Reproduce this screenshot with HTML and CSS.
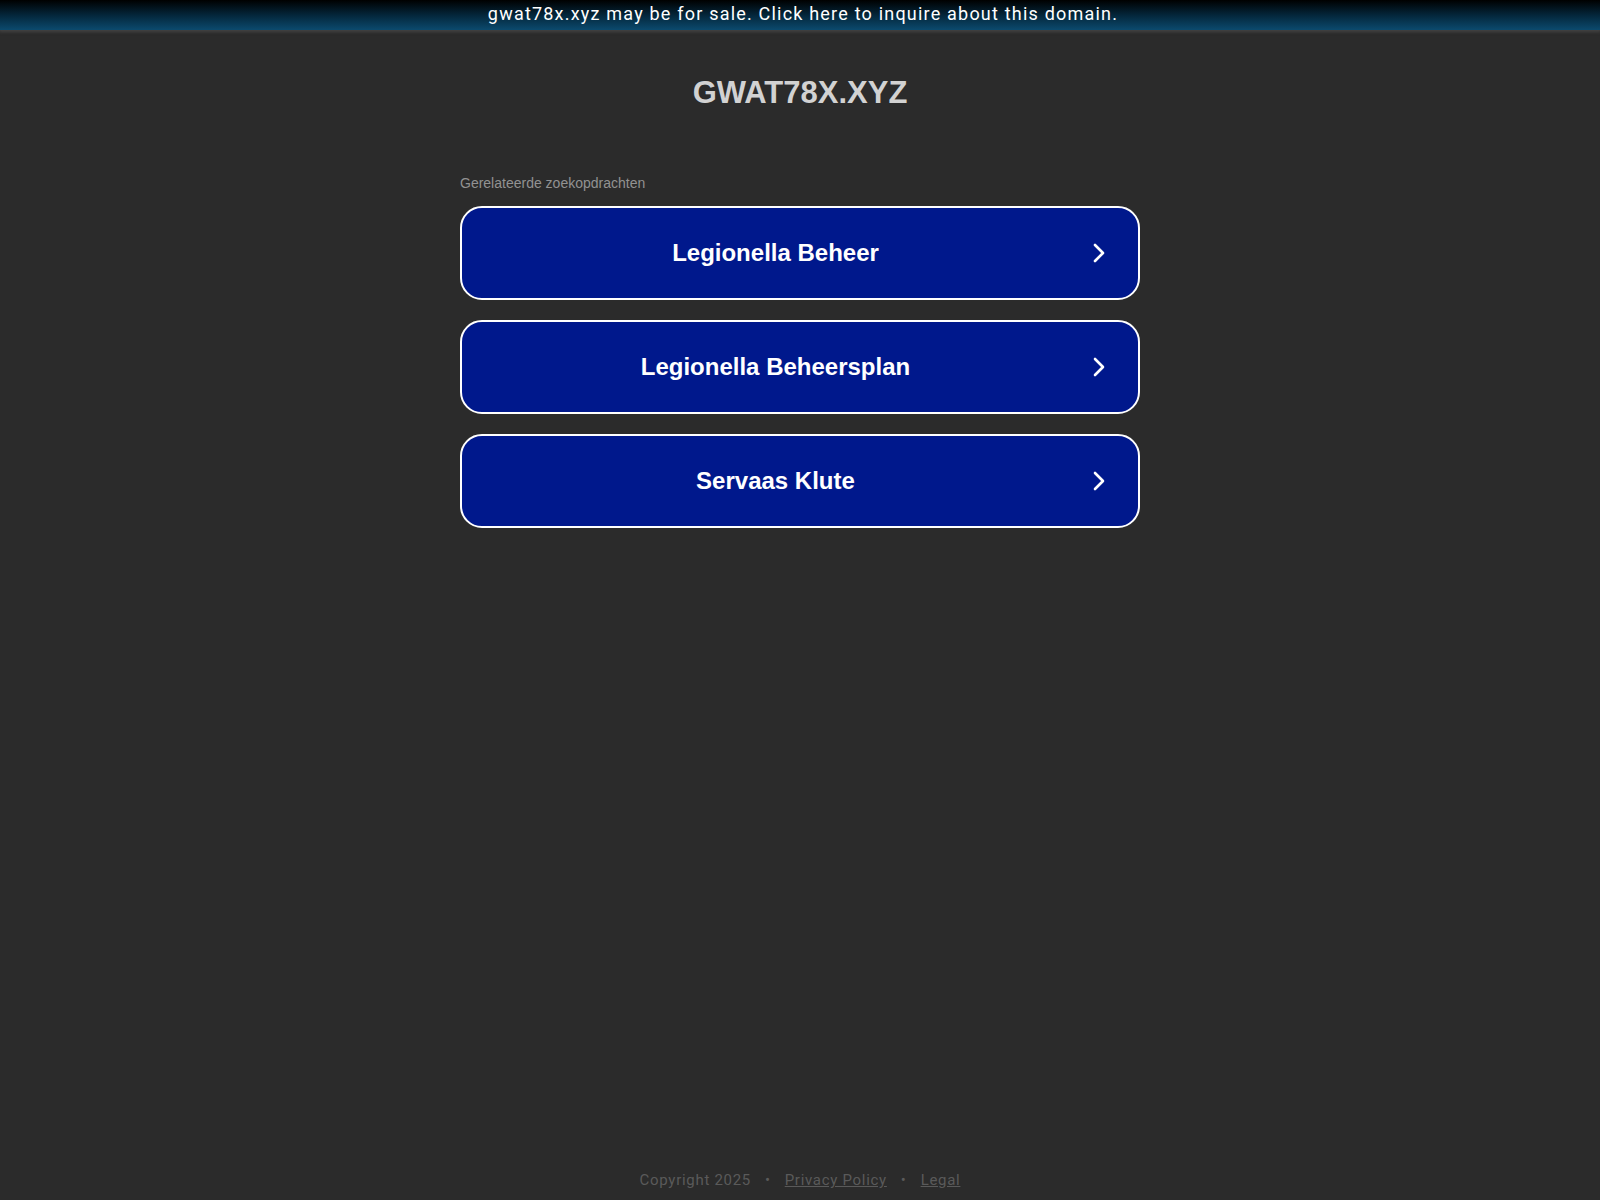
FILE: index.html
```html
<!DOCTYPE html>
<html lang="nl">
<head>
<meta charset="utf-8">
<title>gwat78x.xyz</title>
<link rel="stylesheet" href="styles.css">
</head>
<body>
<div class="page">
  <a class="sale-bar" href="#">gwat78x.xyz may be for sale. Click here to inquire about this domain.</a>
  <main class="content">
    <h1 class="domain">GWAT78X.XYZ</h1>
    <section class="related">
      <p class="related-title">Gerelateerde zoekopdrachten</p>
      <div class="links">
        <a class="link-btn" href="#"><span class="link-text">Legionella Beheer</span><svg class="chev" viewBox="0 0 12 20" width="12" height="20"><path d="M2 2 L10 10 L2 18" fill="none" stroke="#fff" stroke-width="2.6" stroke-linecap="round" stroke-linejoin="round"/></svg></a>
        <a class="link-btn" href="#"><span class="link-text">Legionella Beheersplan</span><svg class="chev" viewBox="0 0 12 20" width="12" height="20"><path d="M2 2 L10 10 L2 18" fill="none" stroke="#fff" stroke-width="2.6" stroke-linecap="round" stroke-linejoin="round"/></svg></a>
        <a class="link-btn" href="#"><span class="link-text">Servaas Klute</span><svg class="chev" viewBox="0 0 12 20" width="12" height="20"><path d="M2 2 L10 10 L2 18" fill="none" stroke="#fff" stroke-width="2.6" stroke-linecap="round" stroke-linejoin="round"/></svg></a>
      </div>
    </section>
  </main>
  <footer class="footer">
    <span>Copyright 2025</span>
    <span class="dot">•</span>
    <a href="#">Privacy Policy</a>
    <span class="dot">•</span>
    <a href="#">Legal</a>
  </footer>
</div>
</body>
</html>
```

FILE: styles.css
```css
html, body {
  margin: 0;
  padding: 0;
  height: 100%;
}
body {
  background: #2b2b2b;
  font-family: "Liberation Sans", Arial, sans-serif;
}
.page {
  min-height: 100vh;
  display: flex;
  flex-direction: column;
}
.sale-bar {
  display: block;
  height: 30px;
  line-height: 27px;
  padding-left: 6px;
  text-align: center;
  color: #fff;
  text-decoration: none;
  font-family: Roboto, "Liberation Sans", sans-serif;
  font-size: 18px;
  letter-spacing: 1.2px;
  background: linear-gradient(to bottom, #000000 0%, #04263a 50%, #0b4a6e 100%);
  box-shadow: 0 1px 3px 1px rgba(70,70,70,0.9);
}
.content {
  flex: 1;
  width: 680px;
  margin: 0 auto;
}
.domain {
  margin: 46px 0 0;
  text-align: center;
  font-size: 31px;
  line-height: 34px;
  font-weight: bold;
  color: #d2d2d2;
}
.related {
  margin-top: 64px;
}
.related-title {
  margin: 0 0 14px 0;
  font-size: 14px;
  line-height: 18px;
  color: #929292;
}
.links {
  display: flex;
  flex-direction: column;
  gap: 20px;
}
.link-btn {
  display: flex;
  align-items: center;
  height: 90px;
  border: 2px solid #fff;
  border-radius: 22px;
  background: #00188c;
  color: #fff;
  text-decoration: none;
  padding: 0 33px 0 0;
}
.link-text {
  flex: 1;
  text-align: center;
  font-size: 24px;
  font-weight: bold;
}
.chev {
  display: block;
  margin-left: 4px;
}
.footer {
  display: flex;
  justify-content: center;
  gap: 14px;
  padding: 0 0 11px;
  font-family: Roboto, "Liberation Sans", sans-serif;
  font-size: 15px;
  letter-spacing: 0.7px;
  color: #5a5a5a;
}
.footer a {
  color: #5a5a5a;
}
```
